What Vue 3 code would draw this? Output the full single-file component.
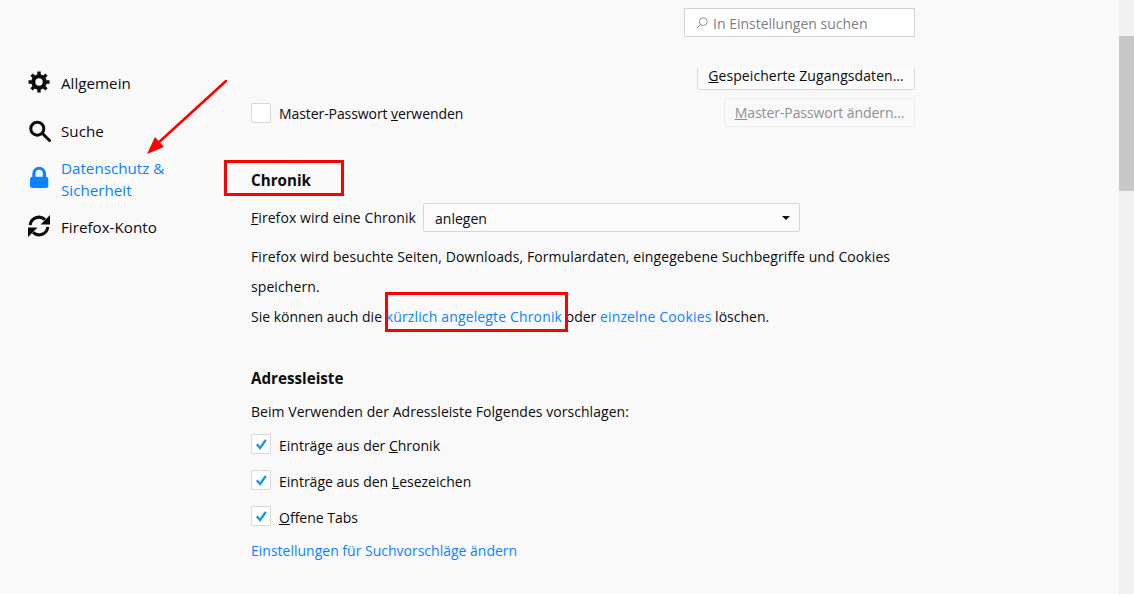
<script setup>
const nav = [
  { id: 'gear', label: 'Allgemein' },
  { id: 'find', label: 'Suche' },
  { id: 'lock', label: 'Datenschutz & Sicherheit', active: true },
  { id: 'sync', label: 'Firefox-Konto' },
]
</script>

<template>
  <div class="page">
    <aside class="side">
      <div v-for="n in nav" :key="n.id" class="nav" :class="[n.id, { active: n.active }]">
        <svg v-if="n.id === 'gear'" class="ico" viewBox="0 0 24 24" fill="none" stroke="#0c0c0d">
          <circle cx="12" cy="12" r="5.700" stroke-width="4" />
          <path stroke-width="3.400" d="M12 1.500V6M12 18v4.500M1.500 12H6M18 12h4.500M4.600 4.600l3 3M19.400 4.600l-3 3M4.600 19.400l3-3M19.400 19.400l-3-3" />
        </svg>
        <svg v-else-if="n.id === 'find'" class="ico" viewBox="0 0 24 24" fill="none" stroke="#0c0c0d">
          <circle cx="10.300" cy="9.700" r="6.500" stroke-width="3" />
          <path d="M15.500 14.500l7 7" stroke-width="3" stroke-linecap="round" />
        </svg>
        <svg v-else-if="n.id === 'lock'" class="ico" viewBox="0 0 24 24">
          <rect x="3" y="10.700" width="18.300" height="11.300" rx="2.500" fill="#0a84ff" />
          <path d="M6.900 11.500V7.500a5.250 5.250 0 0 1 10.500 0v4" fill="none" stroke="#0a84ff" stroke-width="3.200" />
        </svg>
        <svg v-else class="ico" viewBox="0 0 24 24" fill="#0c0c0d" stroke="none">
          <path d="M3.200 11.200A8.800 8.800 0 0 1 18 5.600M20.800 12.800A8.800 8.800 0 0 1 6 18.400" fill="none" stroke="#0c0c0d" stroke-width="3" />
          <path d="M23 1v9.500h-9.500zM1 23v-9.500h9.500z" />
        </svg>
        <span class="label">{{ n.label }}</span>
      </div>
    </aside>

    <main class="main">
      <div class="search">
        <svg class="glass" viewBox="0 0 12 12" fill="none" stroke="#8f8f94" stroke-width="1">
          <circle cx="7.300" cy="4.700" r="3.900" />
          <path d="M4.500 7.500L0.800 11.200" />
        </svg>
        <span class="placeholder">In Einstellungen suchen</span>
      </div>

      <div class="btn-row">
        <div class="btn saved"><span><u>G</u>espeicherte Zugangsdaten…</span></div>
      </div>

      <div class="master">
        <label class="check master-check">
          <span class="box"></span>
          <span class="txt-m tight">Master-Passwort <u>v</u>erwenden</span>
        </label>
        <div class="btn off"><span class="tight"><u>M</u>aster-Passwort ändern…</span></div>
      </div>

      <h2 class="h-chronik">Chronik</h2>

      <div class="hist">
        <span class="hist-label"><u>F</u>irefox wird eine Chronik</span>
        <div class="select">
          <span class="value">anlegen</span>
          <i class="caret"></i>
        </div>
      </div>

      <p class="para">
        <span class="wide">Firefox wird besuchte Seiten, Downloads, Formulardaten, eingegebene Suchbegriffe und Cookies speichern.</span><br />
        Sie können auch die <a class="link wider">kürzlich angelegte Chronik</a> oder <a class="link wider">einzelne Cookies</a> löschen.
      </p>

      <h2 class="h-addr">Adressleiste</h2>
      <p class="lead">Beim Verwenden der Adressleiste Folgendes vorschlagen:</p>

      <div class="checks">
        <label class="check">
          <span class="box"><svg viewBox="0 0 18 18" class="tick"><path d="M4.800 9.300l3.300 3.700L13.800 5" /></svg></span>
          <span class="txt">Einträge aus der <u>C</u>hronik</span>
        </label>
        <label class="check">
          <span class="box"><svg viewBox="0 0 18 18" class="tick"><path d="M4.800 9.300l3.300 3.700L13.800 5" /></svg></span>
          <span class="txt">Einträge aus den <u>L</u>esezeichen</span>
        </label>
        <label class="check">
          <span class="box"><svg viewBox="0 0 18 18" class="tick"><path d="M4.800 9.300l3.300 3.700L13.800 5" /></svg></span>
          <span class="txt"><u>O</u>ffene Tabs</span>
        </label>
      </div>

      <a class="link foot">Einstellungen für Suchvorschläge ändern</a>
    </main>

    <div class="scroll"><div class="thumb"></div></div>

    <div class="mark mark-a"></div>
    <div class="mark mark-b"></div>
    <svg class="arrow" width="100" height="90" viewBox="0 0 100 90">
      <path d="M79 1L10 64" stroke="#f00" stroke-width="2.600" fill="none" stroke-linecap="round" />
      <path d="M0 74L8 57L17 67z" fill="#f00" />
    </svg>
  </div>
</template>

<style>
html, body { margin: 0; background: #f9f9fa; }
</style>

<style scoped>
.page {
  position: relative;
  display: flex;
  width: 1134px;
  height: 594px;
  overflow: hidden;
  background: #f9f9fa;
  color: #0c0c0d;
  font-family: "Open Sans", "Noto Sans", sans-serif;
  font-size: 14px;
}
.side {
  width: 251px;
  flex: none;
  box-sizing: border-box;
  padding: 72px 60px 0 27px;
}
.nav {
  display: flex;
  align-items: flex-start;
  gap: 10px;
  font-size: 15.2px;
  line-height: 22px;
  height: 30px;
}
.nav .ico { width: 24px; height: 24px; flex: none; margin-top: -2px; }
.gear { margin-bottom: 18px; }
.find { margin-bottom: 7px; }
.nav.find .ico { margin-top: -1px; }
.lock { height: 44px; margin-bottom: 15px; color: #0a84ff; }
.nav.lock .ico { margin-top: 9px; }
.label { display: block; width: 120px; }
.main {
  width: 664px;
  flex: none;
  padding-top: 8px;
}
.search {
  width: 231px;
  height: 29px;
  box-sizing: border-box;
  margin-left: auto;
  display: flex;
  align-items: center;
  gap: 5px;
  padding-left: 11px;
  background: #fff;
  border: 1px solid #d3d3d6;
  color: #808084;
  white-space: nowrap;
}
.placeholder { padding-top: 2px; }
.glass { width: 12px; height: 12px; }
.btn-row { display: flex; justify-content: flex-end; margin-top: 31px; }
.btn {
  box-sizing: border-box;
  display: flex;
  align-items: center;
  justify-content: center;
  border: 1px solid #d7d7db;
  border-radius: 2px;
  background: #fbfbfb;
  white-space: nowrap;
}
.saved { height: 22px; width: 218px; border-top: 0; border-radius: 0 0 2px 2px; padding-bottom: 7px; letter-spacing: 0.07px; }
.off { height: 29px; width: 191px; color: #8f8f94; background: #f9f9fa; border-color: #ececef; }
.tight { letter-spacing: -0.08px; }
.master {
  display: flex;
  justify-content: space-between;
  align-items: flex-start;
  margin-top: 8px;
  height: 29px;
}
.master-check { margin-top: 5px; }
.check { display: flex; align-items: flex-start; gap: 8px; line-height: 20px; }
.txt-m { margin-top: 1px; }
.txt { margin-top: 2px; }
.box {
  width: 20px;
  height: 20px;
  box-sizing: border-box;
  background: #fff;
  border: 1px solid #d7d7db;
  border-radius: 2px;
  flex: none;
}
.tick { display: block; width: 18px; height: 18px; }
.tick path { fill: none; stroke: #1e9be0; stroke-width: 2.400; }
h2 { margin: 0; font-size: 15.2px; font-weight: 700; line-height: 22px; }
.h-chronik { margin-top: 42px; }
.hist { display: flex; align-items: center; gap: 7px; margin-top: 12px; height: 29px; }
.hist-label { letter-spacing: 0.07px; }
.select {
  width: 377px;
  height: 29px;
  box-sizing: border-box;
  display: flex;
  align-items: center;
  justify-content: space-between;
  padding: 0 9px 0 11px;
  border: 1px solid #d7d7db;
  border-radius: 2px;
  background: #fbfbfb;
}
.value { padding-top: 2px; }
.caret {
  width: 0;
  height: 0;
  border: 4px solid transparent;
  border-top: 4px solid #0c0c0d;
  border-bottom: 0;
}
.para { margin: 10px 0 0; line-height: 30px; width: 664px; }
.wide { letter-spacing: 0.09px; }
.wider { letter-spacing: 0.15px; }
.link { color: #0a84ff; }
.h-addr { margin-top: 35px; }
.lead { margin: 12px 0 0; line-height: 22px; letter-spacing: 0.05px; }
.checks { display: flex; flex-direction: column; gap: 14px; margin-top: 11px; }
.foot { display: block; margin-top: 12px; line-height: 22px; }
.scroll {
  position: absolute;
  top: 0;
  right: 0;
  bottom: 0;
  width: 15px;
  background: #f1f1f1;
}
.thumb { margin-top: 36px; height: 155px; background: #c8c8c8; }
.mark { position: absolute; box-sizing: border-box; border: 3px solid #f00; }
.mark-a { left: 224px; top: 160px; width: 120px; height: 36px; }
.mark-b { left: 385px; top: 292px; width: 183px; height: 40px; }
.arrow { position: absolute; left: 147px; top: 80px; }
</style>
